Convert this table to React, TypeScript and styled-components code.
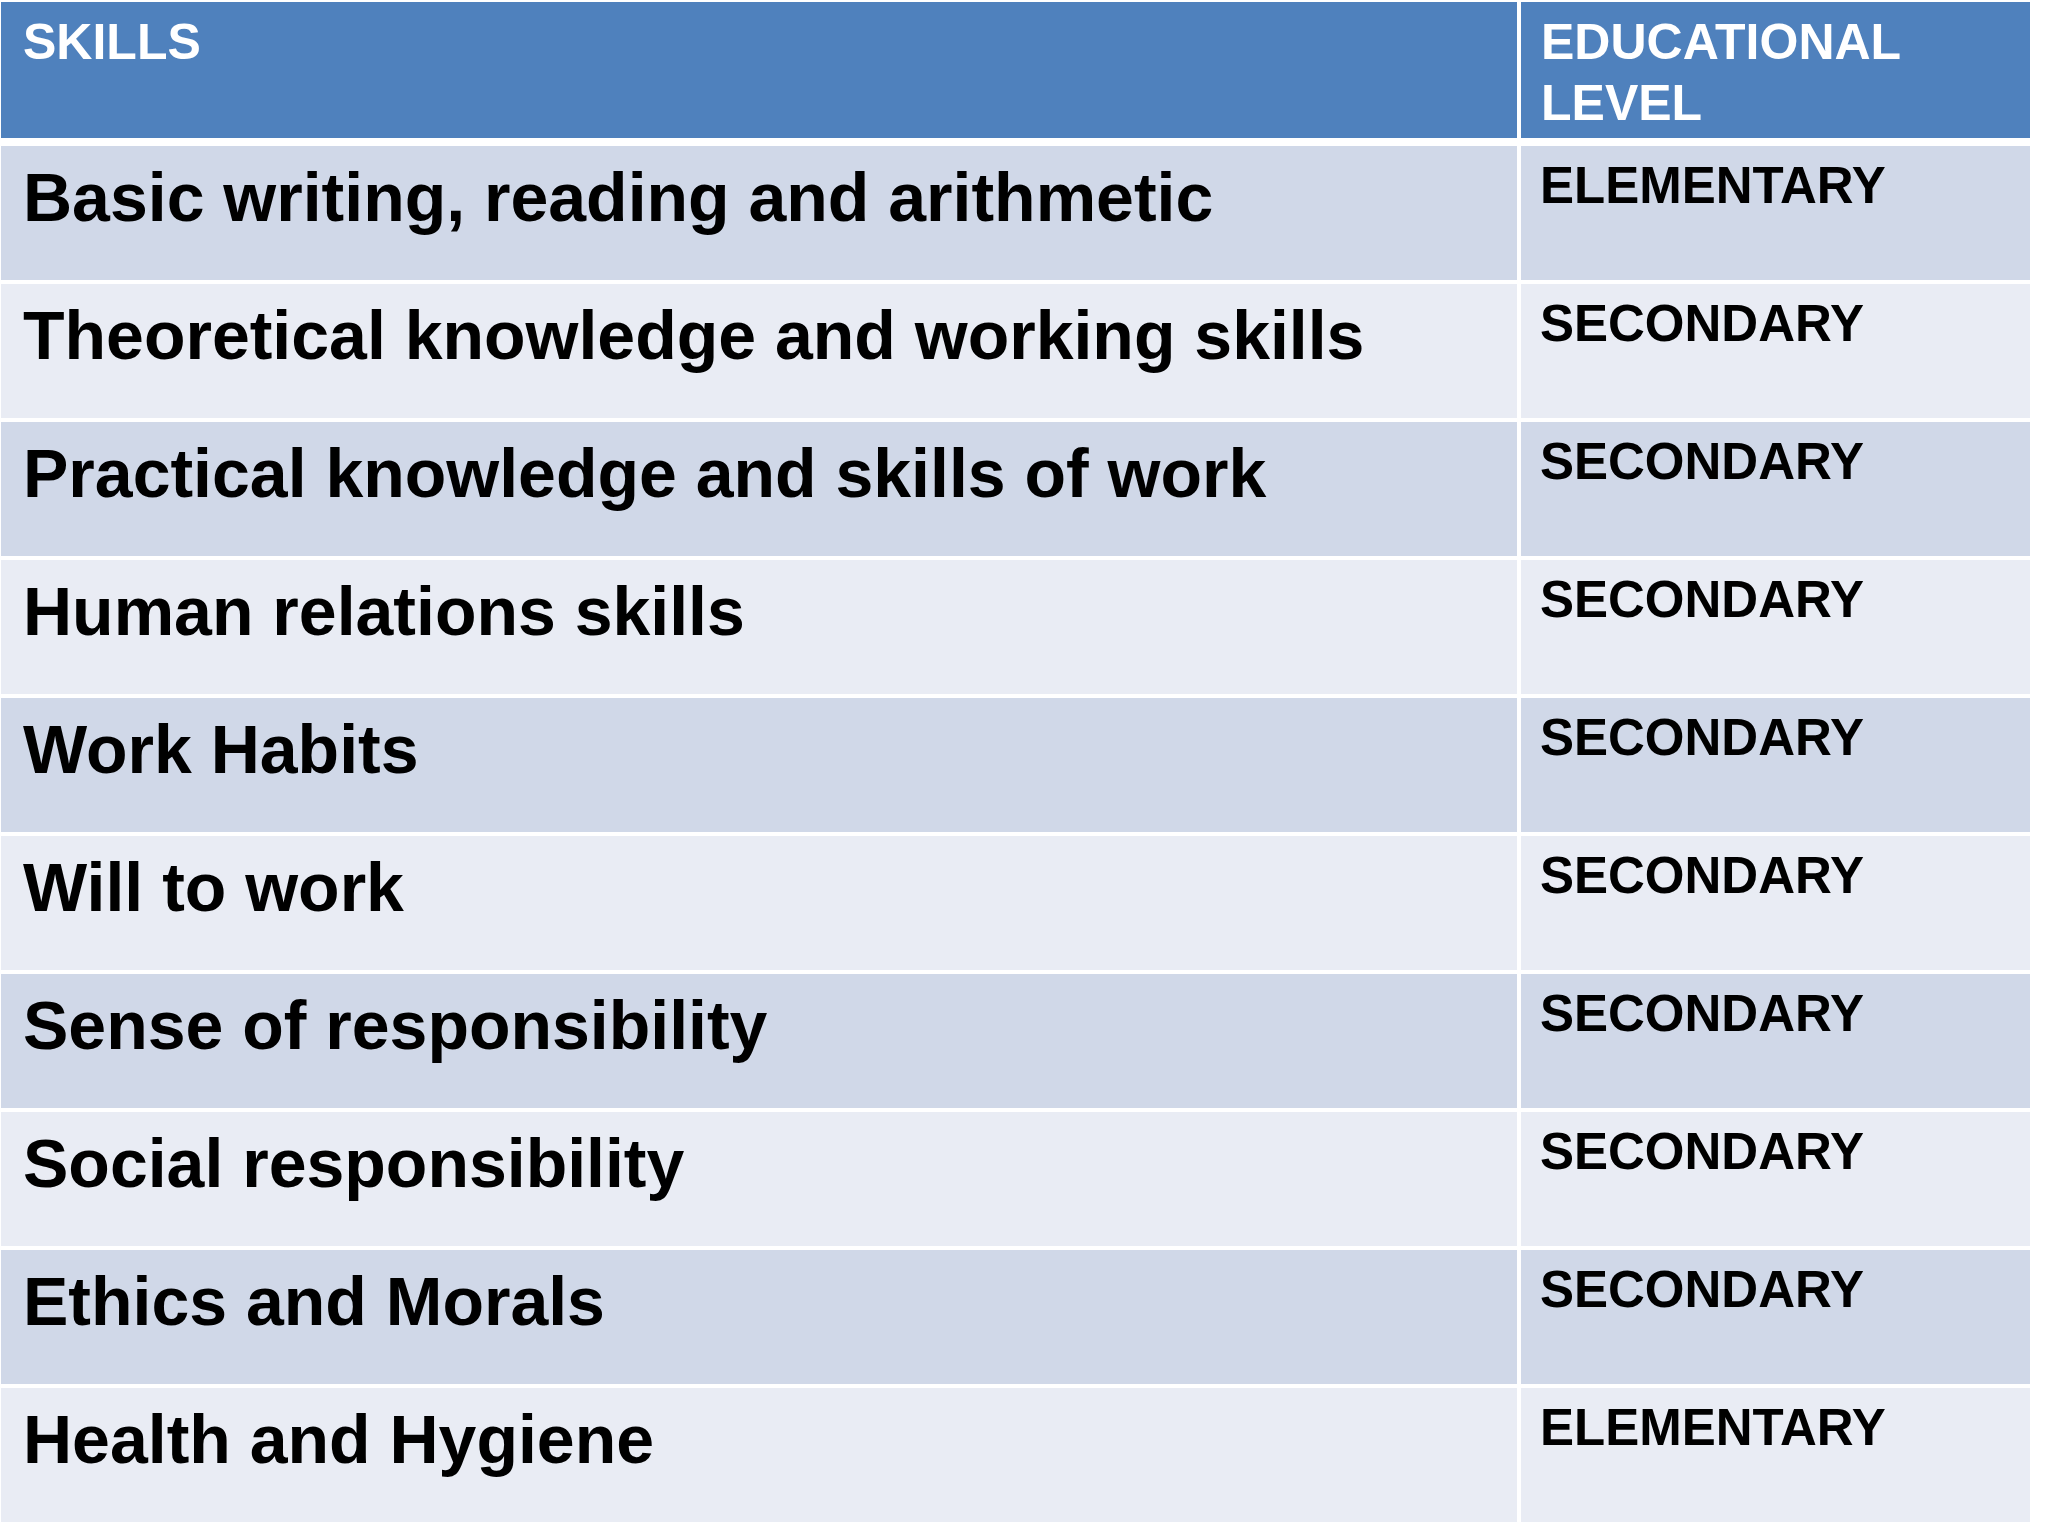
import React from 'react';
import styled, { createGlobalStyle } from 'styled-components';

const rows: { skill: string; level: string }[] = [
  { skill: 'Basic writing, reading and arithmetic', level: 'ELEMENTARY' },
  { skill: 'Theoretical knowledge and working skills', level: 'SECONDARY' },
  { skill: 'Practical knowledge and skills of work', level: 'SECONDARY' },
  { skill: 'Human relations skills', level: 'SECONDARY' },
  { skill: 'Work Habits', level: 'SECONDARY' },
  { skill: 'Will to work', level: 'SECONDARY' },
  { skill: 'Sense of responsibility', level: 'SECONDARY' },
  { skill: 'Social responsibility', level: 'SECONDARY' },
  { skill: 'Ethics and Morals', level: 'SECONDARY' },
  { skill: 'Health and Hygiene', level: 'ELEMENTARY' },
];

const GlobalStyle = createGlobalStyle`
  html, body {
    margin: 0;
    padding: 0;
    background: #ffffff;
  }
  body {
    font-family: "Liberation Sans", Arial, sans-serif;
  }
`;

const Page = styled.div`
  width: 2048px;
  height: 1536px;
  padding: 2px 0 0 1px;
  box-sizing: border-box;
  background: #ffffff;
`;

const Table = styled.div`
  width: 2029px;
  display: flex;
  flex-direction: column;
  gap: 4px;
`;

const Row = styled.div<{ $head?: boolean }>`
  display: grid;
  grid-template-columns: 1516px 1fr;
  column-gap: 4px;
  height: ${(p) => (p.$head ? '136px' : '134px')};
  margin-bottom: ${(p) => (p.$head ? '4px' : '0')};
`;

const HeadCell = styled.div<{ $right?: boolean }>`
  background: #4f81bd;
  color: #ffffff;
  font-weight: 700;
  font-size: 50px;
  line-height: 61px;
  padding: 10px 0 0 ${(p) => (p.$right ? '20px' : '22px')};
  box-sizing: border-box;
`;

const Cell = styled.div<{ $odd: boolean; $level?: boolean }>`
  background: ${(p) => (p.$odd ? '#d0d8e8' : '#e9ecf4')};
  color: #000000;
  font-weight: 700;
  font-size: ${(p) => (p.$level ? '51px' : '68px')};
  line-height: 1.15;
  padding: ${(p) => (p.$level ? '11px 0 0 19px' : '12px 0 0 22px')};
  box-sizing: border-box;
  white-space: nowrap;
`;

export default function App() {
  return (
    <Page>
      <GlobalStyle />
      <Table>
        <Row $head>
          <HeadCell>SKILLS</HeadCell>
          <HeadCell $right>
            EDUCATIONAL
            <br />
            LEVEL
          </HeadCell>
        </Row>
        {rows.map((r, i) => (
          <Row key={r.skill}>
            <Cell $odd={i % 2 === 0}>{r.skill}</Cell>
            <Cell $odd={i % 2 === 0} $level>
              {r.level}
            </Cell>
          </Row>
        ))}
      </Table>
    </Page>
  );
}
